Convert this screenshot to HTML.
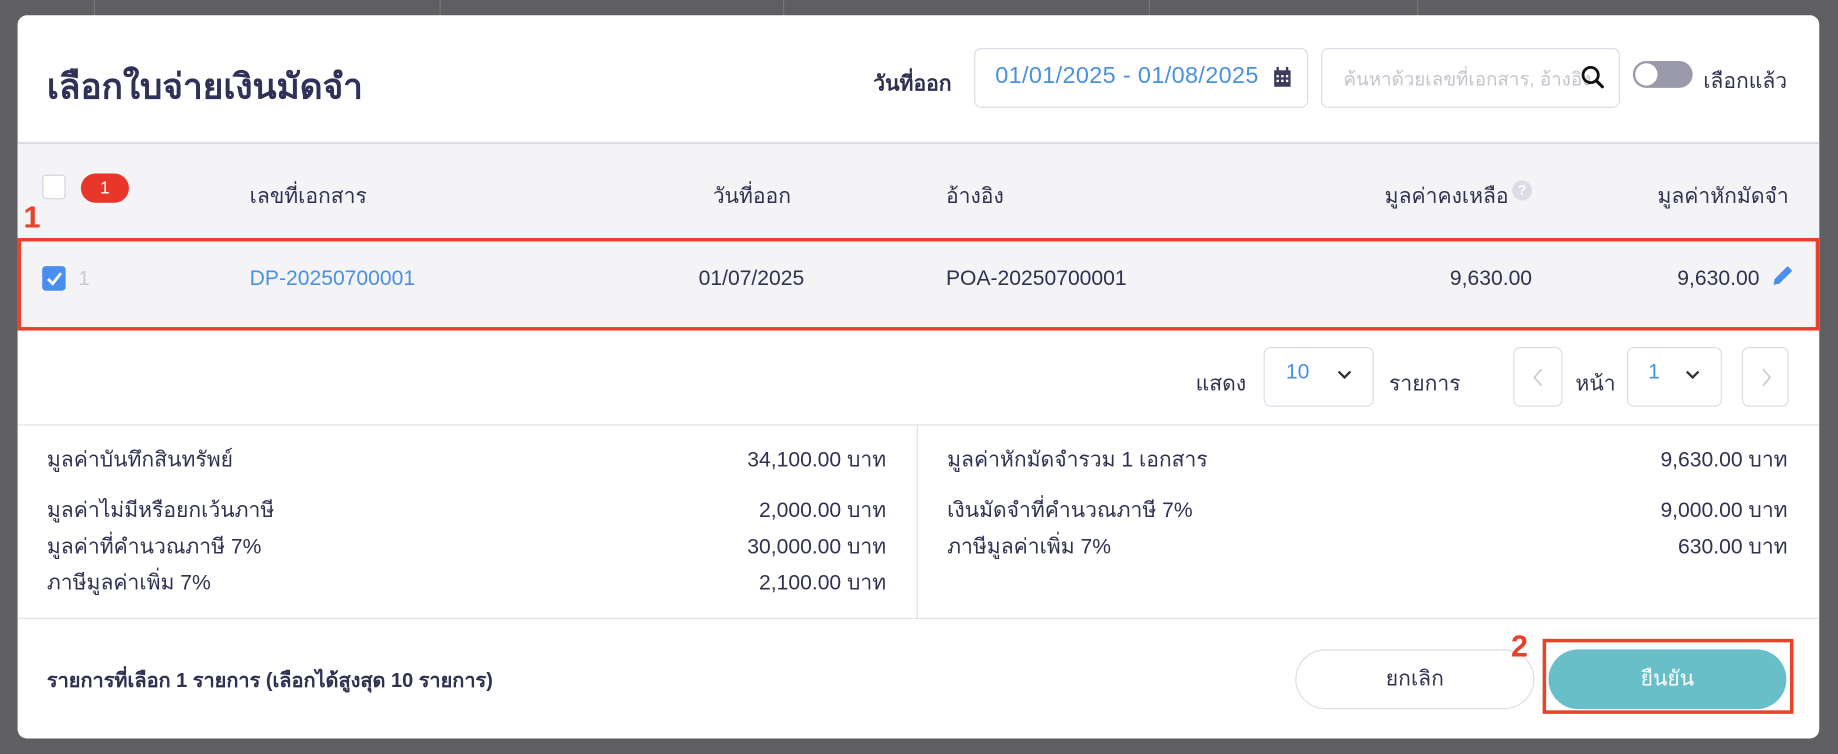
<!DOCTYPE html>
<html><head><meta charset="utf-8"><style>
*{box-sizing:border-box;margin:0;padding:0}
html,body{width:1838px;height:754px;overflow:hidden;background:#5f5f61;font-family:"Liberation Sans",sans-serif;color:#2f3150}
#s{position:absolute;left:0;top:0;width:1568px;height:643px;transform:scale(1.17219);transform-origin:0 0}
.a{position:absolute;white-space:nowrap}
.m{position:absolute;left:15px;top:13px;width:1537px;height:617px;background:#fff;border-radius:8px;overflow:hidden}
.r{text-align:right}
.box{position:absolute;border:1px solid #dcdce6;border-radius:6px;background:#fff}
</style></head><body><div id="s">
<div class="a" style="left:80px;top:0;width:1px;height:13px;background:#777"></div>
<div class="a" style="left:375px;top:0;width:1px;height:13px;background:#777"></div>
<div class="a" style="left:668px;top:0;width:1px;height:13px;background:#777"></div>
<div class="a" style="left:980px;top:0;width:1px;height:13px;background:#777"></div>
<div class="a" style="left:1209px;top:0;width:1px;height:13px;background:#777"></div>
<div class="m">
<div class="a" style="left:25px;top:38px;font-size:30px;font-weight:bold;color:#2f3157">เลือกใบจ่ายเงินมัดจำ</div>
<div class="a" style="left:730px;top:43px;font-size:18px;font-weight:bold">วันที่ออก</div>
<div class="box" style="left:816px;top:28px;width:285px;height:51px"></div>
<div class="a" style="left:834px;top:41px;font-size:20px;color:#4a90e2;letter-spacing:0.3px">01/01/2025 - 01/08/2025</div>
<svg class="a" style="left:1071px;top:44px" width="16" height="18" viewBox="0 0 16 18"><rect x="1" y="3" width="14" height="14" fill="#3a3c5a"/><g fill="#fff"><rect x="3" y="7" width="2" height="2"/><rect x="7" y="7" width="2" height="2"/><rect x="11" y="7" width="2" height="2"/><rect x="3" y="11" width="2" height="2"/><rect x="7" y="11" width="2" height="2"/><rect x="11" y="11" width="2" height="2"/></g><rect x="3" y="0" width="2" height="4" fill="#3a3c5a"/><rect x="11" y="0" width="2" height="4" fill="#3a3c5a"/></svg>
<div class="box" style="left:1112px;top:28px;width:255px;height:51px;overflow:hidden"><div class="a" style="left:18px;top:14px;font-size:16px;color:#c4c4cc">ค้นหาด้วยเลขที่เอกสาร, อ้างอิง</div></div>
<svg class="a" style="left:1333px;top:42px" width="22" height="22" viewBox="0 0 22 22"><circle cx="9" cy="9" r="6.5" fill="none" stroke="#111" stroke-width="2.4"/><path d="M14 14l5 5" stroke="#111" stroke-width="2.6" stroke-linecap="round"/></svg>
<div class="a" style="left:1378px;top:39px;width:51px;height:23px;border-radius:12px;background:#9a9aab"></div>
<div class="a" style="left:1380px;top:41px;width:19px;height:19px;border-radius:50%;background:#fff"></div>
<div class="a" style="left:1438px;top:41px;font-size:18px">เลือกแล้ว</div>
<div class="a" style="left:0;top:108px;width:1537px;height:2px;background:#dcdce6"></div>
<div class="a" style="left:0;top:110px;width:1537px;height:82px;background:#f4f4f7"></div>
<div class="a" style="left:0;top:192px;width:1537px;height:76px;background:#f4f4f7;border-top:1px solid #e4e4ec"></div>
<div class="a" style="left:21px;top:136px;width:20px;height:21px;border:1px solid #d4d4dc;border-radius:3px;background:#fff"></div>
<div class="a" style="left:54px;top:135px;width:41px;height:25px;border-radius:13px;background:#e8372a;color:#fff;font-size:15px;text-align:center;line-height:25px">1</div>
<div class="a" style="left:198px;top:139px;font-size:18px">เลขที่เอกสาร</div>
<div class="a" style="left:593px;top:139px;font-size:18px">วันที่ออก</div>
<div class="a" style="left:792px;top:139px;font-size:18px">อ้างอิง</div>
<div class="a r" style="right:265px;top:139px;font-size:18px">มูลค่าคงเหลือ</div>
<div class="a" style="left:1275px;top:141px;width:17px;height:17px;border-radius:50%;background:#dcdce6;color:#fff;font-size:12px;text-align:center;line-height:17px;font-weight:bold">?</div>
<div class="a r" style="right:26px;top:139px;font-size:18px">มูลค่าหักมัดจำ</div>
<div class="a" style="left:21px;top:214px;width:20px;height:21px;border-radius:3px;background:#4a8ff0"><svg width="20" height="21"><path d="M5 11l4 4 7-9" fill="none" stroke="#fff" stroke-width="2.4"/></svg></div>
<div class="a" style="left:52px;top:215px;font-size:17px;color:#c8c8d0">1</div>
<div class="a" style="left:198px;top:214px;font-size:18px;color:#4a90e2">DP-20250700001</div>
<div class="a" style="left:581px;top:214px;font-size:18px">01/07/2025</div>
<div class="a" style="left:792px;top:214px;font-size:18px">POA-20250700001</div>
<div class="a r" style="right:245px;top:214px;font-size:18px">9,630.00</div>
<div class="a r" style="right:51px;top:214px;font-size:18px">9,630.00</div>
<svg class="a" style="left:1495px;top:211px" width="22" height="22" viewBox="0 0 22 22"><path d="M3 19l1-5L15 3l4 4L8 18z" fill="#4a8ff0"/></svg>
<div class="box" style="left:1063px;top:283px;width:94px;height:51px"></div>
<div class="a" style="left:1005px;top:299px;font-size:18px">แสดง</div>
<div class="a" style="left:1082px;top:294px;font-size:18px;color:#4a90e2">10</div>
<svg class="a" style="left:1125px;top:302px" width="14" height="10"><path d="M2 2l5 5 5-5" fill="none" stroke="#333" stroke-width="2"/></svg>
<div class="a" style="left:1170px;top:299px;font-size:18px">รายการ</div>
<div class="box" style="left:1276px;top:283px;width:42px;height:51px"></div>
<svg class="a" style="left:1291px;top:300px" width="12" height="18"><path d="M9 2L3 9l6 7" fill="none" stroke="#ccc" stroke-width="1.5"/></svg>
<div class="a" style="left:1329px;top:299px;font-size:18px">หน้า</div>
<div class="box" style="left:1373px;top:283px;width:81px;height:51px"></div>
<div class="a" style="left:1391px;top:294px;font-size:18px;color:#4a90e2">1</div>
<svg class="a" style="left:1422px;top:302px" width="14" height="10"><path d="M2 2l5 5 5-5" fill="none" stroke="#333" stroke-width="2"/></svg>
<div class="box" style="left:1471px;top:283px;width:40px;height:51px"></div>
<svg class="a" style="left:1486px;top:300px" width="12" height="18"><path d="M3 2l6 7-6 7" fill="none" stroke="#ccc" stroke-width="1.5"/></svg>
<div class="a" style="left:0;top:349px;width:1537px;height:1px;background:#e0e0e8"></div>
<div class="a" style="left:767px;top:349px;width:1px;height:165px;background:#e0e0e8"></div>
<div class="a" style="left:0;top:514px;width:1537px;height:1px;background:#e0e0e8"></div>
<div class="a" style="left:25px;top:367px;font-size:18px;line-height:24px">มูลค่าบันทึกสินทรัพย์</div>
<div class="a r" style="right:796px;top:367px;font-size:18px;line-height:24px">34,100.00 บาท</div>
<div class="a" style="left:25px;top:407px;font-size:18px;line-height:31px">มูลค่าไม่มีหรือยกเว้นภาษี<br>มูลค่าที่คำนวณภาษี 7%<br>ภาษีมูลค่าเพิ่ม 7%</div>
<div class="a r" style="right:796px;top:407px;font-size:18px;line-height:31px">2,000.00 บาท<br>30,000.00 บาท<br>2,100.00 บาท</div>
<div class="a" style="left:793px;top:367px;font-size:18px;line-height:24px">มูลค่าหักมัดจำรวม 1 เอกสาร</div>
<div class="a r" style="right:27px;top:367px;font-size:18px;line-height:24px">9,630.00 บาท</div>
<div class="a" style="left:793px;top:407px;font-size:18px;line-height:31px">เงินมัดจำที่คำนวณภาษี 7%<br>ภาษีมูลค่าเพิ่ม 7%</div>
<div class="a r" style="right:27px;top:407px;font-size:18px;line-height:31px">9,000.00 บาท<br>630.00 บาท</div>
<div class="a" style="left:25px;top:554px;font-size:17px;font-weight:bold">รายการที่เลือก 1 รายการ (เลือกได้สูงสุด 10 รายการ)</div>
<div class="a" style="left:1090px;top:541px;width:204px;height:51px;border:1px solid #dcdce6;border-radius:26px;text-align:center;line-height:49px;font-size:18px">ยกเลิก</div>
<div class="a" style="left:1306px;top:541px;width:203px;height:51px;background:#68bfc9;border-radius:26px;text-align:center;line-height:51px;font-size:18px;color:#fff">ยืนยัน</div>
</div>
<div class="a" style="left:15px;top:203px;width:1537px;height:79px;border:3px solid #e8432a"></div>
<div class="a" style="left:20px;top:170px;font-size:26px;font-weight:bold;color:#e8432a">1</div>
<div class="a" style="left:1316px;top:545px;width:214px;height:64px;border:3px solid #e8432a"></div>
<div class="a" style="left:1289px;top:536px;font-size:26px;font-weight:bold;color:#e8432a">2</div>
</div></body></html>
